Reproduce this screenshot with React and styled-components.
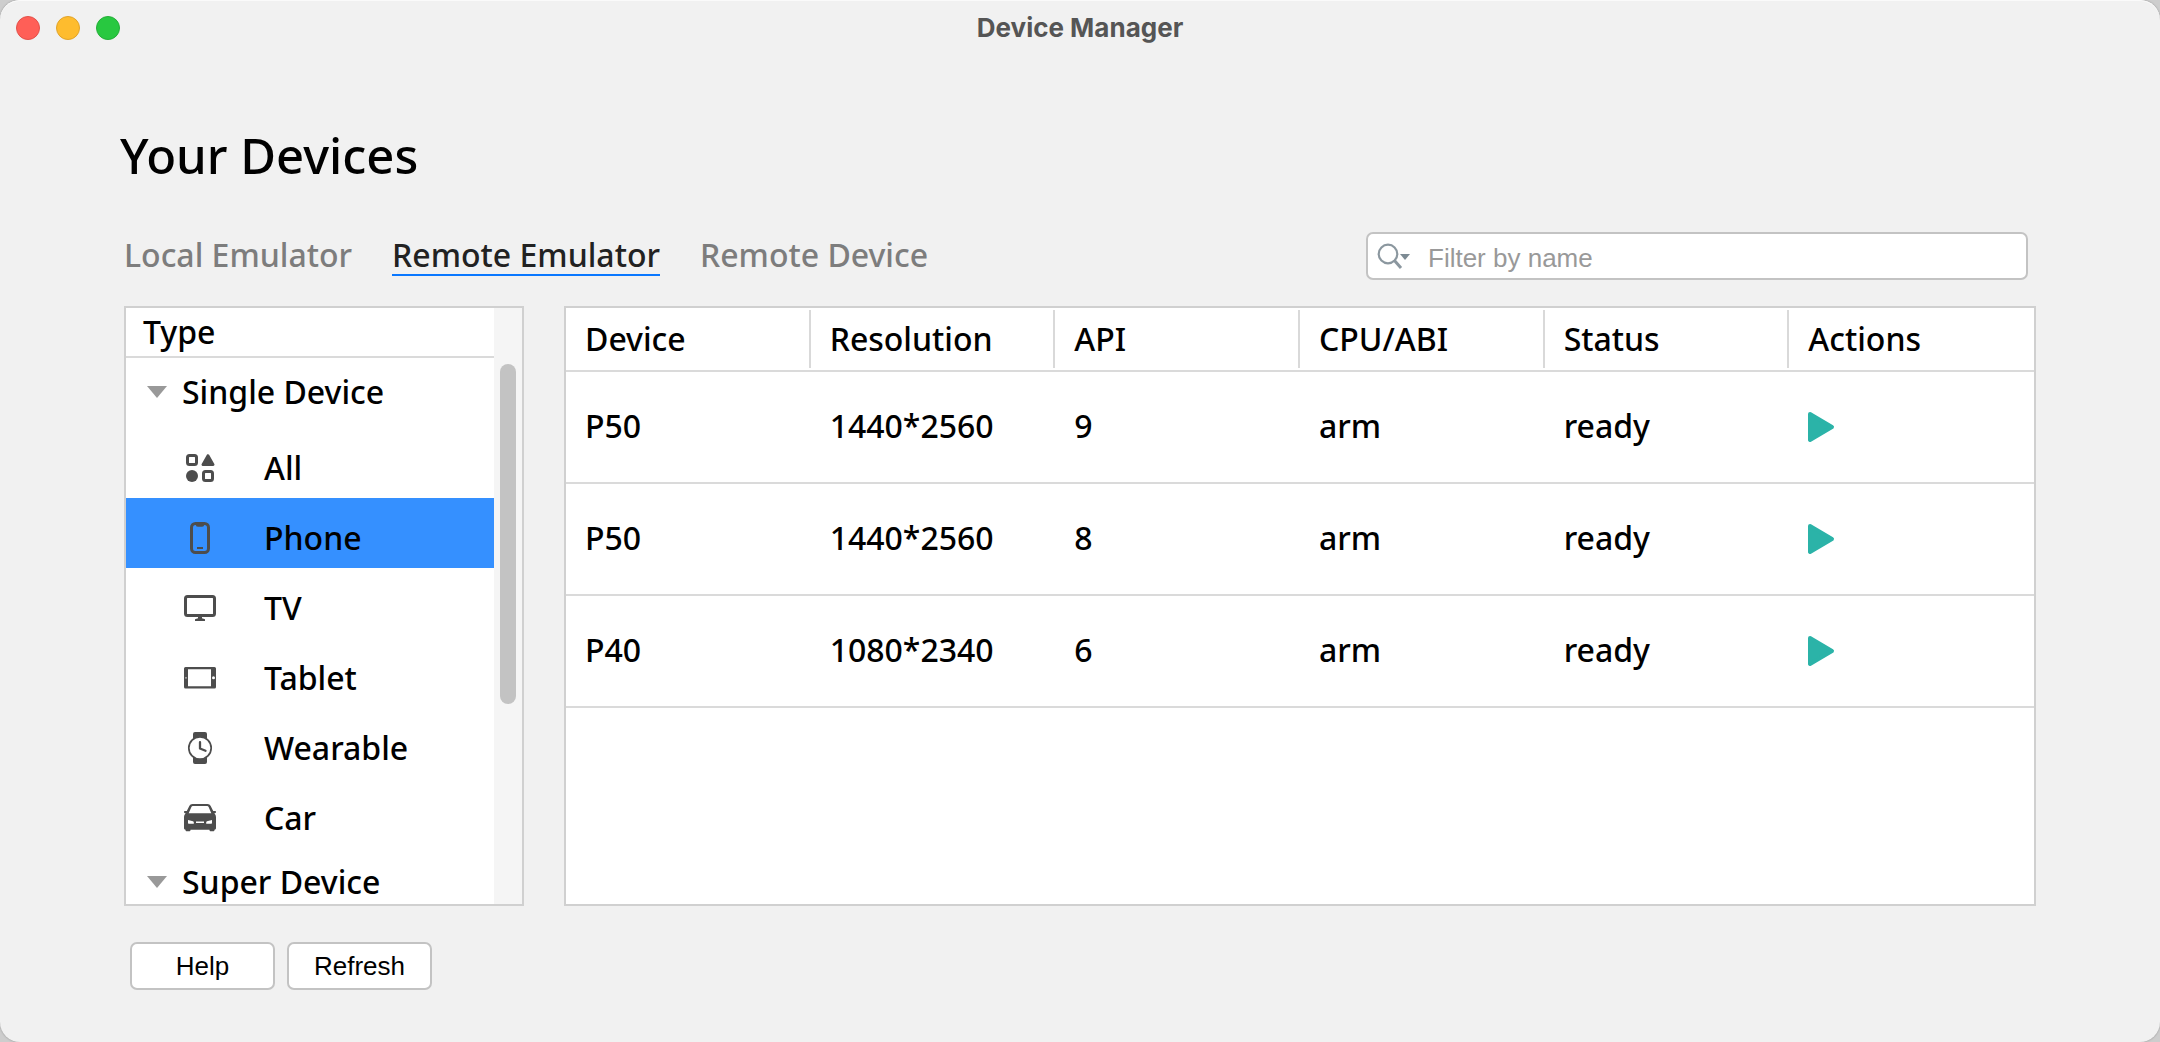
import React, { useState } from "react";
import styled, { createGlobalStyle, css } from "styled-components";

const GlobalStyle = createGlobalStyle`
  *, *::before, *::after { box-sizing: border-box; }
  body {
    margin: 0;
    background: #cdcdcd;
    font-family: "Noto Sans", "Open Sans", sans-serif;
    font-size: 32px;
    font-weight: 500;
    color: #000;
  }
  button, input { font: inherit; color: inherit; }
`;

const controlFont = css`
  font-family: "Liberation Sans", Arial, sans-serif;
  font-size: 26px;
  font-weight: 400;
`;

const Window = styled.div`
  display: flex;
  flex-direction: column;
  height: 100vh;
  min-height: 640px;
  border-radius: 20px;
  background: #f1f1f1;
  box-shadow: inset 0 1px 0 #fafafa, 0 0 2px #8a8a8a;
  overflow: hidden;
`;

const TitleBar = styled.header`
  display: grid;
  grid-template-columns: 1fr auto 1fr;
  align-items: center;
  height: 56px;
  flex: none;
  padding: 0 16px;
`;

const Lights = styled.div`
  display: flex;
  gap: 16px;
`;

const Light = styled.button`
  width: 24px;
  height: 24px;
  padding: 0;
  border: 1px solid ${(p) => p.$edge};
  border-radius: 50%;
  background: ${(p) => p.$color};
`;

const WindowTitle = styled.div`
  font-family: Inter, Roboto, sans-serif;
  font-size: 26px;
  font-weight: 700;
  line-height: 32px;
  color: #555;
`;

const Main = styled.main`
  display: flex;
  flex-direction: column;
  flex: 1;
  min-height: 0;
  padding: 66px 120px 52px;
`;

const Heading = styled.h1`
  margin: 0 0 44px;
  font-size: 49px;
  font-weight: 500;
  line-height: 66px;
`;

const Content = styled.div`
  display: flex;
  flex-direction: column;
  flex: 1;
  min-height: 0;
  padding: 0 4px;
`;

const Toolbar = styled.div`
  display: flex;
  justify-content: space-between;
  align-items: flex-start;
  margin-bottom: 26px;
  padding-right: 8px;
`;

const Tabs = styled.div`
  display: flex;
  gap: 40px;
`;

const Tab = styled.button`
  padding: 4px 0 0;
  border: 0;
  border-bottom: 2px solid ${(p) => (p.$active ? "#0a78ff" : "transparent")};
  background: none;
  line-height: 38px;
  color: ${(p) => (p.$active ? "#222" : "#7d7d7d")};
`;

const SearchBox = styled.label`
  display: flex;
  align-items: center;
  gap: 18px;
  width: 662px;
  height: 48px;
  padding: 0 8px;
  border: 2px solid #c3c3c3;
  border-radius: 7px;
  background: #fff;
`;

const SearchInput = styled.input`
  ${controlFont}
  flex: 1;
  min-width: 0;
  height: 40px;
  padding: 4px 0 0;
  border: 0;
  outline: 0;
  background: none;
  &::placeholder { color: #999; opacity: 1; }
`;

const Panels = styled.div`
  display: flex;
  gap: 40px;
  flex: 1;
  min-height: 0;
`;

const panel = css`
  border: 2px solid #d0d0d0;
  background: #fff;
  overflow: hidden;
`;

const TypePanel = styled.nav`
  ${panel}
  display: flex;
  flex: none;
  width: 400px;
`;

const TypeList = styled.div`
  flex: 1;
  overflow: hidden;
`;

const TypeHeader = styled.div`
  height: 50px;
  padding-left: 17px;
  border-bottom: 2px solid #dadada;
  line-height: 48px;
`;

const GroupRow = styled.button`
  display: flex;
  align-items: center;
  gap: 14px;
  width: 100%;
  height: 70px;
  padding: 0 0 2px 20px;
  border: 0;
  background: none;
  line-height: 44px;
`;

const TypeRow = styled.button`
  display: flex;
  align-items: center;
  gap: 48px;
  width: 100%;
  height: 70px;
  padding: 10px 0 0 58px;
  border: 0;
  background: ${(p) => (p.$selected ? "#3590ff" : "none")};
  line-height: 44px;
`;

const ScrollTrack = styled.div`
  width: 28px;
  padding: 56px 6px 0;
  background: #f5f5f5;
`;

const ScrollThumb = styled.div`
  height: 63%;
  border-radius: 8px;
  background: #c3c3c3;
`;

const TablePanel = styled.section`
  ${panel}
  flex: 1;
  min-width: 0;
`;

const Table = styled.table`
  width: 100%;
  table-layout: fixed;
  border-collapse: separate;
  border-spacing: 0;
`;

const HeadCell = styled.th`
  height: 64px;
  padding: 2px 0;
  border-bottom: 2px solid #dadada;
  font-weight: inherit;
  text-align: left;
`;

const HeadLabel = styled.div`
  padding-left: 19px;
  border-right: ${(p) => (p.$last ? "0" : "2px solid #d9d9d9")};
  line-height: 58px;
`;

const Cell = styled.td`
  height: 112px;
  padding: 0 0 4px 19px;
  border-bottom: 2px solid #dadada;
`;

const PlayButton = styled.button`
  display: flex;
  padding: 4px 0 0;
  border: 0;
  background: none;
`;

const Footer = styled.footer`
  display: flex;
  gap: 12px;
  margin-top: 36px;
  padding-left: 6px;
`;

const PushButton = styled.button`
  ${controlFont}
  width: 145px;
  height: 48px;
  padding: 0;
  border: 2px solid #c3c3c3;
  border-radius: 7px;
  background: #fff;
`;

const INK = "#4d4d4d";

const Svg = styled.svg`
  display: block;
  flex: none;
`;

const AllIcon = () => (
  <Svg width="32" height="32" viewBox="0 0 32 32" aria-hidden="true">
    <g fill="none" stroke={INK} strokeWidth="3">
      <rect x="3.5" y="3.5" width="9" height="9" rx="2" />
      <rect x="19.5" y="19.5" width="9" height="9" rx="2" />
    </g>
    <circle cx="8" cy="24" r="6" fill={INK} />
    <path d="M24 3.5 18.8 12.6h10.4z" fill={INK} stroke={INK} strokeWidth="2.6" strokeLinejoin="round" />
  </Svg>
);

const PhoneIcon = () => (
  <Svg width="32" height="32" viewBox="0 0 32 32" aria-hidden="true">
    <rect x="7.5" y="1.5" width="17" height="29" rx="4" fill="none" stroke={INK} strokeWidth="3" />
    <path d="M11 2h10l-1 1.6c-.4.8-.9 1.2-1.8 1.2h-4.4c-.9 0-1.4-.4-1.8-1.2z" fill={INK} />
    <path d="M13 26h6" stroke={INK} strokeWidth="2" />
  </Svg>
);

const TvIcon = () => (
  <Svg width="32" height="32" viewBox="0 0 32 32" aria-hidden="true">
    <rect x="1.5" y="4.5" width="29" height="19" rx="2" fill="none" stroke={INK} strokeWidth="3" />
    <path d="M14 24h4v2.2l3 1v1.8H11v-1.8l3-1z" fill={INK} />
  </Svg>
);

const TabletIcon = () => (
  <Svg width="32" height="32" viewBox="0 0 32 32" aria-hidden="true">
    <path
      fillRule="evenodd"
      fill={INK}
      d="M1.5 5h29A1.5 1.5 0 0 1 32 6.5v18.500a1.5 1.5 0 0 1-1.5 1.5h-29A1.5 1.5 0 0 1 0 25V6.5A1.5 1.5 0 0 1 1.5 5zM4 7.2v17h23v-17z"
    />
    <circle cx="29.5" cy="15.8" r="1.5" fill="#fff" />
    <circle cx="2" cy="15.8" r=".9" fill="#bbb" />
  </Svg>
);

const WatchIcon = () => (
  <Svg width="32" height="32" viewBox="0 0 32 32" aria-hidden="true">
    <path
      d="M9 8V2a2 2 0 0 1 2-2h10a2 2 0 0 1 2 2v6a11 11 0 0 0-14 0zM9 24v6a2 2 0 0 0 2 2h10a2 2 0 0 0 2-2v-6a11 11 0 0 1-14 0z"
      fill={INK}
    />
    <circle cx="16" cy="16" r="11.2" fill="#fff" stroke={INK} strokeWidth="1.7" />
    <path d="M16 10.2v6.3l5.5 2.3" fill="none" stroke={INK} strokeWidth="2.3" strokeLinecap="round" strokeLinejoin="round" />
  </Svg>
);

const CarIcon = () => (
  <Svg width="32" height="32" viewBox="0 0 32 32" aria-hidden="true">
    <path
      fillRule="evenodd"
      fill={INK}
      d="M8.5 2h15c1.5 0 2.600.7 3.2 2l2.5 5h1.8c.6 0 1 .4 1 1s-.4 1.2-1 1.2h-.7c1.1 1.1 1.7 2.5 1.7 4.1V26c0 1-.6 1.7-1.5 1.7V28c0 .8-.6 1.3-1.4 1.3h-2.2c-.8 0-1.4-.5-1.4-1.3v-.3H6.5v.3c0 .8-.6 1.3-1.4 1.3H2.900c-.8 0-1.4-.5-1.4-1.3v-.3C.6 27.7 0 27 0 26V15.300c0-1.6.6-3 1.7-4.1H1c-.6 0-1-.6-1-1.2s.4-1 1-1h1.8l2.5-5c.6-1.3 1.7-2 3.2-2zM8.500 4 7.500 4.700 4.700 11.200h22.600L24.500 4.700 23.500 4z"
    />
    <path d="M4 18l5 1.2c.5.200.8.500.8 1v1.6H5c-.6 0-1-.4-1-1zM28 18l-5 1.2c-.5.200-.8.500-.8 1v1.6H27c.6 0 1-.4 1-1zM12 19.5h8V21h-8z" fill="#fff" />
  </Svg>
);

const Disclosure = () => (
  <Svg width="22" height="12" viewBox="0 0 22 12" aria-hidden="true">
    <path d="M1 0h20L11 12z" fill="#999" />
  </Svg>
);

const SearchIcon = () => (
  <Svg width="34" height="28" viewBox="0 0 34 28" aria-hidden="true">
    <g fill="none" stroke="#8b979f" strokeWidth="2.2">
      <circle cx="12" cy="12" r="9.3" />
      <path d="M18 18l7 8" strokeWidth="3" />
    </g>
    <path d="M24 12h10l-5 6z" fill="#7d8b94" />
  </Svg>
);

const PlayIcon = () => (
  <Svg width="28" height="32" viewBox="0 0 28 32" aria-hidden="true">
    <path
      d="M2 3 24 16 2 29z"
      fill="#2bb3a8"
      stroke="#2bb3a8"
      strokeWidth="4"
      strokeLinejoin="round"
    />
  </Svg>
);

const TABS = ["Local Emulator", "Remote Emulator", "Remote Device"];

const TYPES = [
  { name: "All", Icon: AllIcon },
  { name: "Phone", Icon: PhoneIcon },
  { name: "TV", Icon: TvIcon },
  { name: "Tablet", Icon: TabletIcon },
  { name: "Wearable", Icon: WatchIcon },
  { name: "Car", Icon: CarIcon },
];

const COLUMNS = ["Device", "Resolution", "API", "CPU/ABI", "Status", "Actions"];

const DEVICES = [
  ["P50", "1440*2560", "9", "arm", "ready"],
  ["P50", "1440*2560", "8", "arm", "ready"],
  ["P40", "1080*2340", "6", "arm", "ready"],
];

export default function App() {
  const [tab, setTab] = useState("Remote Emulator");
  const [type, setType] = useState("Phone");
  const [filter, setFilter] = useState("");
  const rows = DEVICES.filter((d) => d[0].toLowerCase().includes(filter.toLowerCase()));

  return (
    <>
      <GlobalStyle />
      <Window>
        <TitleBar>
          <Lights>
            <Light aria-label="Close" $color="#ff5f57" $edge="#e2514a" />
            <Light aria-label="Minimize" $color="#febc2e" $edge="#e0a32a" />
            <Light aria-label="Zoom" $color="#28c840" $edge="#24ae38" />
          </Lights>
          <WindowTitle>Device Manager</WindowTitle>
        </TitleBar>
        <Main>
          <Heading>Your Devices</Heading>
          <Content>
            <Toolbar>
              <Tabs role="tablist">
                {TABS.map((name) => (
                  <Tab
                    key={name}
                    role="tab"
                    aria-selected={name === tab}
                    $active={name === tab}
                    onClick={() => setTab(name)}
                  >
                    {name}
                  </Tab>
                ))}
              </Tabs>
              <SearchBox>
                <SearchIcon />
                <SearchInput
                  type="text"
                  aria-label="Filter by name"
                  placeholder="Filter by name"
                  value={filter}
                  onChange={(e) => setFilter(e.target.value)}
                />
              </SearchBox>
            </Toolbar>
            <Panels>
              <TypePanel aria-label="Type">
                <TypeList>
                  <TypeHeader>Type</TypeHeader>
                  <GroupRow aria-expanded="true">
                    <Disclosure />
                    Single Device
                  </GroupRow>
                  {TYPES.map(({ name, Icon }) => (
                    <TypeRow key={name} $selected={name === type} onClick={() => setType(name)}>
                      <Icon />
                      {name}
                    </TypeRow>
                  ))}
                  <GroupRow aria-expanded="true">
                    <Disclosure />
                    Super Device
                  </GroupRow>
                </TypeList>
                <ScrollTrack>
                  <ScrollThumb />
                </ScrollTrack>
              </TypePanel>
              <TablePanel>
                <Table>
                  <thead>
                    <tr>
                      {COLUMNS.map((name, i) => (
                        <HeadCell key={name} scope="col">
                          <HeadLabel $last={i === COLUMNS.length - 1}>{name}</HeadLabel>
                        </HeadCell>
                      ))}
                    </tr>
                  </thead>
                  <tbody>
                    {rows.map((device, i) => (
                      <tr key={i}>
                        {device.map((value, j) => (
                          <Cell key={j}>{value}</Cell>
                        ))}
                        <Cell>
                          <PlayButton aria-label={`Start ${device[0]}`}>
                            <PlayIcon />
                          </PlayButton>
                        </Cell>
                      </tr>
                    ))}
                  </tbody>
                </Table>
              </TablePanel>
            </Panels>
            <Footer>
              <PushButton>Help</PushButton>
              <PushButton>Refresh</PushButton>
            </Footer>
          </Content>
        </Main>
      </Window>
    </>
  );
}
